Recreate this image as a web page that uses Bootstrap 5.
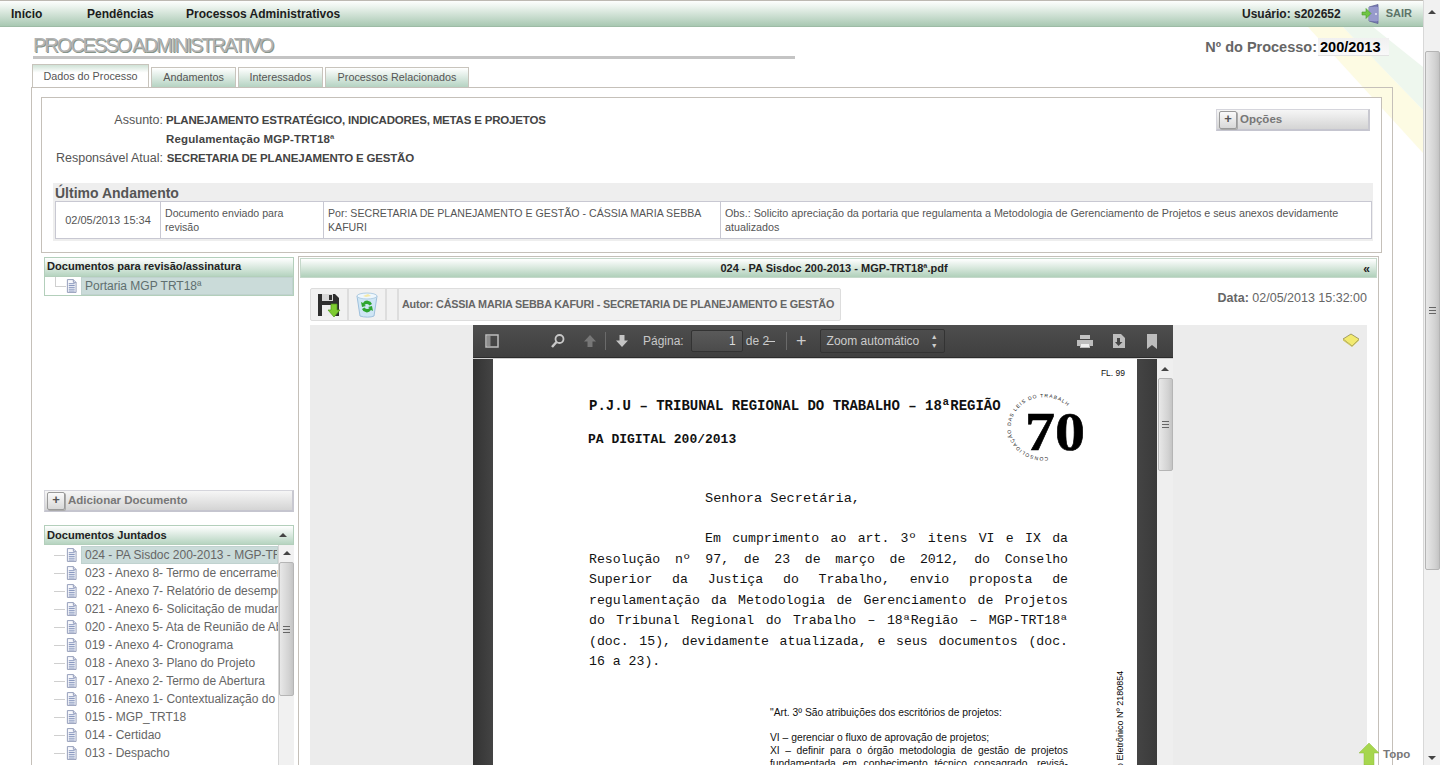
<!DOCTYPE html>
<html lang="pt-BR">
<head>
<meta charset="utf-8">
<title>Processo Administrativo</title>
<link href="https://cdn.jsdelivr.net/npm/bootstrap@5.3.0/dist/css/bootstrap.min.css" rel="stylesheet">
<style>
html,body{height:765px;overflow:hidden;background:#fff}
body{font-family:"Liberation Sans",Arial,sans-serif;font-size:12px;color:#444}
.shell{height:765px;overflow:hidden}
.pagecol{width:1423px;flex:none;position:relative;height:765px;overflow:hidden}
.decor{position:absolute;left:1300px;top:27px;z-index:0}
.pagecol>*:not(.decor){position:relative;z-index:1}
.pgscroll{width:17px;flex:none;background:#f1f1f1;border-left:1px solid #d8d8d8;height:765px;display:flex;flex-direction:column;align-items:center;position:relative}
.thumb{background:linear-gradient(90deg,#e8e8e8,#d2d2d2 70%,#c4c4c4);border:1px solid #b5b5b5;border-radius:2px;display:flex;align-items:center;justify-content:center}
.pgscroll .thumb{width:15px;height:519px;margin-top:37px}
.arrow-up{width:0;height:0;border:4px solid transparent;border-bottom:4px solid #444;border-top:0}
.arrow-dn{width:0;height:0;border:4px solid transparent;border-top:4px solid #444;border-bottom:0}
.pgscroll .arrow-up{margin-top:10px}
.pgscroll .arrow-dn{position:absolute;bottom:5px;left:4px}
.grip{width:7px;height:7px;background:repeating-linear-gradient(#666 0 1px,transparent 1px 3px)}
.topbar{height:27px;border-top:1px solid #bdb9b2;border-bottom:1px solid #9dbba5;background:linear-gradient(#fdfefd,#eef5f0 20%,#a8c8b2);padding-left:11px;padding-right:11px;font-weight:700;font-size:12px;color:#1c1c1c}
.topbar .menu-a{width:76px}
.topbar .menu-b{width:99px}
.user{margin-right:20px;color:#222}
.sair{color:#5c7468;font-size:11px;margin-left:4px}
.headrow{height:38px;padding-left:33px;padding-right:34px}
.bigtitle{width:762px;height:32px;border-bottom:3px solid #c4c4c4;font-size:20px;letter-spacing:-2.05px;line-height:36px;color:#b2b2b2;text-shadow:1px 1px 0 #87958a;font-weight:400}
.procno{font-size:14.5px;font-weight:700;color:#666;margin-top:10px;margin-left:auto}
.procval{display:inline-block;background:linear-gradient(#f0f0f0,#f9f9f9);border-bottom:1px solid #e2e2e2;color:#000;width:71px;padding-left:2px;height:18px;line-height:18px;margin-left:1px}
.tabrow{height:22px;padding-left:32px;gap:2px;position:relative}
.tabx{height:20px;margin-top:2px;border:1px solid #c8c4bc;border-bottom:0;background:linear-gradient(#fff,#b5d3c2);font-size:10.8px;color:#555;text-align:center;line-height:18px}
.tabx.on{height:23px;margin-top:-1px;background:linear-gradient(#cfe2d6,#fff 35%);position:relative;z-index:2;line-height:22px}
.w1{width:117px}.w2{width:85px}.w3{width:85px}.w4{width:144px}
.mainpanel{margin-left:31px;width:1362px;height:700px;border:1px solid #c5c0b9;border-bottom:0;padding:9px 10px 0 9px}
.infobox{height:156px;border:1px solid #c5c0b9;background:#fff;padding:13px 11px 0 11px;position:relative}
.info-l{width:113px;text-align:right;color:#555;padding-right:3px;font-size:12.5px;font-weight:400;letter-spacing:0}
.inforow{height:19px;line-height:19px;font-weight:700;color:#444;font-size:11.5px;letter-spacing:-.18px}
.widerow{letter-spacing:.15px}
.gbtn{background:linear-gradient(#f6f6f6,#d4d4d4);border:1px solid #d5d5dc;border-bottom:2px solid #c5c5cf;border-right:2px solid #c8c8d0;display:flex;align-items:center;height:22px;font-weight:700;color:#777;font-size:11.5px}
.plus{width:18px;height:18px;margin:0 3px 0 2px;border:1px solid #9a9a9a;border-radius:2px;background:linear-gradient(#fafafa,#d8d8d8);box-shadow:1px 1px 0 #aaa;color:#555;line-height:14px;text-align:center;font-weight:700;font-size:13px}
.optbtn{position:absolute;left:1174px;top:11px;width:154px}
.lastbox{margin-top:15px;height:58px;margin-right:-3px;background:#eee;padding:2px 1px 0 2px}
.lastbox h6{margin:0 0 -1px;font-size:14px;font-weight:700;color:#555;line-height:17px}
.evt{height:38px;border:1px solid #c8c8d2;background:#fff;font-size:10.6px;line-height:14px;color:#555}
.evt>div{padding:4px 4px 0;border-right:1px solid #c8c8d2}
.evt>div:last-child{border-right:0}
.c1{width:105px;text-align:center;padding-top:11px!important;font-size:11px}.c2{width:163px}.c3{width:397px}.c4{flex:1;font-size:10.75px}
.lower{margin-top:3px;margin-left:3px;margin-right:2px;gap:4px}
.leftc{width:250px;flex:none;margin-top:1px}
.sechead{height:20px;border:1px solid #b3cfbb;background:linear-gradient(#fff,#b6d4c0);font-weight:700;color:#222;font-size:11.1px;line-height:16px;padding:0 2px}
.chosenbox{border:1px solid #b3cfbb;border-top:0;height:19px}
.noderow{height:18px;position:relative;padding-left:21px}
.treeitems .noderow{padding-left:22px}
.noderow::before{content:"";position:absolute;left:10px;top:9px;width:11px;border-top:1px solid #cfcfcf}
.chosenbox .noderow::after{content:"";position:absolute;left:10px;top:0;height:9px;border-left:1px solid #cfcfcf}
.noderow svg{flex:none;margin-right:4px}
.nodetext{font-size:12px;color:#666;line-height:18px;white-space:nowrap;overflow:hidden;padding-left:4px;flex:1}
.nodetext.sel{background:#cadbd9;border:1px solid #c0d2cf;line-height:16px;padding-left:3px}
.chosen-t{color:#5f6f6f}
.addbtn{margin-top:194px;width:250px}
.listhead{margin-top:13px}
.treewrap{height:225px;overflow:hidden}
.treeitems{width:234px;flex:none;padding-top:1px}
.innerbar{width:16px;flex:none;background:#f1f1f1;border-left:1px solid #d6d6d6;display:flex;flex-direction:column;align-items:center}
.innerbar .arrow-up{margin-top:6px}
.innerbar .thumb{width:15px;height:134px;margin-top:7px}
.rightc{width:1081px;flex:none;height:520px;border:1px solid #c5c0b9;border-bottom:0;padding:1px}
.docbar{height:20px;border:1px solid #c5d8ca;background:linear-gradient(#fff,#b0d0ba);font-weight:700;font-size:11px;color:#222;line-height:19px;text-align:center;position:relative;padding-right:9px}
.collapse-x{position:absolute;right:6px;top:1px;font-size:12px}
.doctools{padding:10px 10px 0 10px;height:47px}
.toolset{height:33px;border:1px solid #ddd;border-radius:2px;background:#f1f1f1;font-weight:700;font-size:10.8px;letter-spacing:-.19px;color:#666}
.tcell{border-right:2px solid #ddd;height:100%;display:flex;align-items:center;justify-content:center}
.t1{width:38px}.t2{width:38px}.t3{width:12px}
.authorname{padding:0 6px 0 3px;white-space:nowrap}
.datet{font-size:12.5px;color:#666;padding-top:1px;margin-left:auto}
.graybg{margin:0 10px;background:#ececec;height:440px;position:relative;display:flex}
.note{position:absolute;right:7px;top:8px}
.viewer{width:700px;flex:none;background:#3c3c3c;height:440px;margin-left:163px}
.vtool{height:33px;background:linear-gradient(#4e4e4e,#3f3f3f);border-bottom:1px solid #2b2b2b;color:#c8c8c8;font-size:12px;box-shadow:0 1px 0 #cfcfcf;position:relative;z-index:2}
.vinput{width:52px;height:22px;background:linear-gradient(#5a5a5a,#4b4b4b);border:1px solid #333;border-radius:2px;text-align:right;padding-right:6px;line-height:20px;margin-left:7px;color:#ddd}
.vselect{width:125px;height:24px;border:1px solid #333;border-radius:2px;background:linear-gradient(#4d4d4d,#414141);line-height:22px;padding:0 6px;color:#ccc;margin-left:13px;justify-content:space-between}
.vsep{width:1px;height:18px;background:#6a6a6a}
.vbody{height:407px;overflow:hidden;background:linear-gradient(90deg,#333,#444 20px,#444 664px,#333)}
.sheet{width:644px;margin:0 20px;background:#fff;height:440px;position:relative;flex:none;padding:38px 69px 0 96px;color:#111;font-family:"Liberation Mono",monospace;font-size:13.6px;overflow:hidden}
.bold1{font-weight:700;font-size:14px;line-height:20px}
.bold2{font-weight:700;font-size:13px;line-height:20px;margin-top:14px;margin-left:-1px}
.salute{margin-top:39px;padding-left:116px;line-height:20px}
.jline{text-align:justify;text-align-last:justify;line-height:20.5px;font-size:13.2px}
.para1{margin-top:20px}
.indent{padding-left:116px}
.lastl{text-align-last:left}
.foot{font-family:"Liberation Sans",sans-serif;font-size:10.3px;margin:33px 0 0 181px;line-height:13px;color:#111}
.foot .just{text-align:justify;text-align-last:justify}
.flno{position:absolute;right:12px;top:10px;font:8.5px "Liberation Sans",sans-serif}
.vtext{position:absolute;left:622px;top:316px;writing-mode:vertical-rl;transform:rotate(180deg);font:9px "Liberation Sans",sans-serif;white-space:nowrap;height:94px;color:#000}
.seal{position:absolute;left:514px;top:36px}
.vbar{width:16px;flex:none;background:#efefef;display:flex;flex-direction:column;align-items:center}
.vbar .arrow-up{margin-top:9px}
.vbar .thumb{width:15px;height:93px;margin-top:7px}
.pagecol>.topo{position:absolute;left:1359px;top:743px;z-index:5;font-size:11.5px;font-weight:700;color:#777;display:flex;gap:4px}
.topo span{margin-top:3px}
</style>
</head>
<body>
<svg width="0" height="0" class="d-block" style="position:absolute">
<defs>
<symbol id="doc" viewBox="0 0 12 15">
<path d="M1.500.5h6.500l3 3v11h-9.500z" fill="#f7f8fc" stroke="#8d97b5"/>
<path d="M8 .5v3h3" fill="#dfe4f2" stroke="#8d97b5"/>
<path d="M3 5h6.500M3 7h6.500M3 9h6.500M3 11h6.500M3 13h6.500" stroke="#7d8db8" stroke-width="1"/>
</symbol>
</defs>
</svg>
<div class="shell d-flex">
<div class="pagecol">
  <svg class="decor" width="123" height="130" viewBox="0 0 123 130"><polygon points="8,0 43,0 123,83 123,126" fill="#fdfbe3"/><polygon points="43,0 73,0 123,40 123,83" fill="#eef7ee"/></svg>
  <div class="topbar d-flex align-items-center">
    <div class="menu-a">Início</div><div class="menu-b">Pendências</div><div>Processos Administrativos</div>
    <div class="user ms-auto">Usuário: s202652</div>
    <svg width="21" height="20" viewBox="0 0 21 20"><path d="M8 3l9-2.500v19L8 17z" fill="#7d7fb8" stroke="#55578c" stroke-width=".7"/><path d="M8 3h10v14H8z" fill="#a3a5d4" opacity=".7"/><path d="M1 8h4V4.500l5 5-5 5V11H1z" fill="#6fc544" stroke="#4a9a2a" stroke-width=".6"/><circle cx="15" cy="10" r="1" fill="#e6e6f5"/></svg>
    <div class="sair">SAIR</div>
  </div>
  <div class="headrow d-flex align-items-start">
    <div class="bigtitle">PROCESSO ADMINISTRATIVO</div>
    <div class="procno">Nº do Processo:<span class="procval">200/2013</span></div>
  </div>
  <div class="tabrow d-flex">
    <div class="tabx on w1">Dados do Processo</div>
    <div class="tabx w2">Andamentos</div>
    <div class="tabx w3">Interessados</div>
    <div class="tabx w4">Processos Relacionados</div>
  </div>
  <div class="mainpanel">
    <div class="infobox">
      <div class="inforow d-flex"><div class="info-l">Assunto:</div><div>PLANEJAMENTO ESTRATÉGICO, INDICADORES, METAS E PROJETOS</div></div>
      <div class="inforow widerow d-flex"><div class="info-l"></div><div>Regulamentação MGP-TRT18ª</div></div>
      <div class="inforow d-flex"><div class="info-l">Responsável Atual:</div><div>&#8202;SECRETARIA DE PLANEJAMENTO E GESTÃO</div></div>
      <div class="gbtn optbtn"><div class="plus">+</div>Opções</div>
      <div class="lastbox">
        <h6>Último Andamento</h6>
        <div class="evt d-flex">
          <div class="c1">02/05/2013 15:34</div>
          <div class="c2">Documento enviado para revisão</div>
          <div class="c3">Por: SECRETARIA DE PLANEJAMENTO E GESTÃO - CÁSSIA MARIA SEBBA KAFURI</div>
          <div class="c4">Obs.: Solicito apreciação da portaria que regulamenta a Metodologia de Gerenciamento de Projetos e seus anexos devidamente atualizados</div>
        </div>
      </div>
    </div>
    <div class="lower d-flex">
      <div class="leftc">
        <div class="sechead">Documentos para revisão/assinatura</div>
        <div class="chosenbox"><div class="noderow d-flex align-items-center"><svg width="11" height="14"><use href="#doc"/></svg><div class="nodetext sel chosen-t">Portaria MGP TRT18ª</div></div></div>
        <div class="gbtn addbtn"><div class="plus">+</div>Adicionar Documento</div>
        <div class="sechead listhead d-flex justify-content-between align-items-center"><span>Documentos Juntados</span><span class="arrow-up me-1"></span></div>
        <div class="treewrap d-flex">
          <div class="treeitems">
            <div class="noderow d-flex align-items-center"><svg width="11" height="14"><use href="#doc"/></svg><div class="nodetext sel">024 - PA Sisdoc 200-2013 - MGP-TRT18ª.pdf</div></div>
            <div class="noderow d-flex align-items-center"><svg width="11" height="14"><use href="#doc"/></svg><div class="nodetext">023 - Anexo 8- Termo de encerramento</div></div>
            <div class="noderow d-flex align-items-center"><svg width="11" height="14"><use href="#doc"/></svg><div class="nodetext">022 - Anexo 7- Relatório de desempenho</div></div>
            <div class="noderow d-flex align-items-center"><svg width="11" height="14"><use href="#doc"/></svg><div class="nodetext">021 - Anexo 6- Solicitação de mudança</div></div>
            <div class="noderow d-flex align-items-center"><svg width="11" height="14"><use href="#doc"/></svg><div class="nodetext">020 - Anexo 5- Ata de Reunião de Abertura</div></div>
            <div class="noderow d-flex align-items-center"><svg width="11" height="14"><use href="#doc"/></svg><div class="nodetext">019 - Anexo 4- Cronograma</div></div>
            <div class="noderow d-flex align-items-center"><svg width="11" height="14"><use href="#doc"/></svg><div class="nodetext">018 - Anexo 3- Plano do Projeto</div></div>
            <div class="noderow d-flex align-items-center"><svg width="11" height="14"><use href="#doc"/></svg><div class="nodetext">017 - Anexo 2- Termo de Abertura</div></div>
            <div class="noderow d-flex align-items-center"><svg width="11" height="14"><use href="#doc"/></svg><div class="nodetext">016 - Anexo 1- Contextualização do Projeto</div></div>
            <div class="noderow d-flex align-items-center"><svg width="11" height="14"><use href="#doc"/></svg><div class="nodetext">015 - MGP_TRT18</div></div>
            <div class="noderow d-flex align-items-center"><svg width="11" height="14"><use href="#doc"/></svg><div class="nodetext">014 - Certidao</div></div>
            <div class="noderow d-flex align-items-center"><svg width="11" height="14"><use href="#doc"/></svg><div class="nodetext">013 - Despacho</div></div>
          </div>
          <div class="innerbar"><span class="arrow-up"></span><div class="thumb"><span class="grip"></span></div></div>
        </div>
      </div>
      <div class="rightc">
        <div class="docbar">024 - PA Sisdoc 200-2013 - MGP-TRT18ª.pdf<span class="collapse-x">«</span></div>
        <div class="doctools d-flex align-items-start">
          <div class="toolset d-flex align-items-center">
            <div class="tcell t1"><svg width="24" height="26" viewBox="0 0 24 26"><path d="M1 2h17l4 4v18H1z" fill="#2e2e2e"/><path d="M5 2h11v7H5z" fill="#d8d8d8"/><path d="M12 3h3v5h-3z" fill="#333"/><path d="M5 13h13v11H5z" fill="#eee"/><path d="M14 12h6v6h3l-6 7-6-7h3z" fill="#7ecb30" stroke="#4f9a18" stroke-width=".7"/></svg></div>
            <div class="tcell t2"><svg width="26" height="27" viewBox="0 0 26 27"><path d="M3 5c5-3 15-3 20 0l-3 20c-3 1.500-10 1.500-14 0z" fill="#cfe6f5" stroke="#9fc0dc"/><ellipse cx="13" cy="5" rx="10" ry="3" fill="#eef7fd" stroke="#b4cfe4"/><path d="M9 5l5-2 3 2-5 1z" fill="#f4e9a8"/><path d="M18 13a5 5 0 0 0-9-1l-2-1 1 5 4-1-1.500-1a3 3 0 0 1 5 .5zM8 18a5 5 0 0 0 9 1l2 1-1-5-4 1 1.500 1a3 3 0 0 1-5-.5z" fill="#2fa52f"/></svg></div>
            <div class="tcell t3"></div>
            <div class="authorname">Autor: CÁSSIA MARIA SEBBA KAFURI - SECRETARIA DE PLANEJAMENTO E GESTÃO</div>
          </div>
          <div class="datet"><b>Data:</b> 02/05/2013 15:32:00</div>
        </div>
        <div class="graybg">
          <svg class="note" width="18" height="14" viewBox="0 0 18 14"><path d="M1 6l8-5 8 5-7 7z" fill="#f2ea70" stroke="#8f8a50" stroke-width=".8"/><path d="M1 6v1.500l9 6.500 7-6.500V6l-7 7z" fill="#cfc65a"/></svg>
          <div class="viewer">
            <div class="vtool d-flex align-items-center">
              <svg style="margin-left:12px" width="14" height="14" viewBox="0 0 14 14"><rect x="1" y="1" width="12" height="12" fill="none" stroke="#bdbdbd" stroke-width="1.500"/><rect x="2" y="2" width="3.500" height="10" fill="#8c8c8c"/></svg>
              <svg style="margin-left:51px" width="16" height="16" viewBox="0 0 16 16"><circle cx="9.500" cy="6" r="4" fill="none" stroke="#c8c8c8" stroke-width="1.800"/><path d="M6.500 9L2 14" stroke="#c8c8c8" stroke-width="2.500"/></svg>
              <svg style="margin-left:17px" width="14" height="14" viewBox="0 0 14 14"><path d="M7 1l6 6.500H9.500V13h-5V7.500H1z" fill="#777"/></svg>
              <span class="vsep" style="margin:0 9px 0 8px"></span>
              <svg width="14" height="14" viewBox="0 0 14 14"><path d="M7 13l6-6.500H9.500V1h-5v5.500H1z" fill="#c4c4c4"/></svg>
              <span style="margin-left:14px">Página:</span>
              <div class="vinput">1</div>
              <span style="margin-left:3px">de 2</span><span style="width:9px;border-top:1.500px solid #ccc;margin-left:-3px"></span>
              <span class="vsep" style="margin:0 9px 0 11px"></span>
              <span style="font-size:18px;line-height:18px;color:#ccc">+</span>
              <div class="vselect d-flex"><span>Zoom automático</span><span style="font-size:7px;line-height:9px;padding-top:2px;text-align:center">▲<br>▼</span></div>
              <svg class="ms-auto" width="18" height="15" viewBox="0 0 18 15"><path d="M4 1h10v4H4z" fill="#c4c4c4"/><path d="M1 6h16v6h-3v2H4v-2H1z" fill="#bdbdbd"/><path d="M5 10h8v3H5z" fill="#eee"/></svg>
              <svg style="margin-left:18px" width="14" height="16" viewBox="0 0 14 16"><path d="M1 1h8l4 4v10H1z" fill="#bdbdbd"/><path d="M5 5h3v4h2.500L6.500 13 3 9h2z" fill="#444"/></svg>
              <svg style="margin-left:21px;margin-right:16px" width="10" height="15" viewBox="0 0 10 15"><path d="M0 0h10v15L5 11 0 15z" fill="#bdbdbd"/></svg>
            </div>
            <div class="vbody d-flex">
              <div class="sheet">
                <div class="flno">FL. 99</div>
                <div class="bold1">P.J.U – TRIBUNAL REGIONAL DO TRABALHO – 18ªREGIÃO</div>
                <div class="bold2">PA DIGITAL 200/2013</div>
                <div class="salute">Senhora Secretária,</div>
                <div class="jline para1 indent">Em cumprimento ao art. 3º itens VI e IX da</div>
                <div class="jline">Resolução nº 97, de 23 de março de 2012, do Conselho</div>
                <div class="jline">Superior da Justiça do Trabalho, envio proposta de</div>
                <div class="jline">regulamentação da Metodologia de Gerenciamento de Projetos</div>
                <div class="jline">do Tribunal Regional do Trabalho – 18ªRegião – MGP-TRT18ª</div>
                <div class="jline">(doc. 15), devidamente atualizada, e seus documentos (doc.</div>
                <div class="jline lastl">16 a 23).</div>
                <div class="foot">
                  <div>"Art. 3º São atribuições dos escritórios de projetos:</div>
                  <div style="margin-top:12px">VI – gerenciar o fluxo de aprovação de projetos;</div>
                  <div class="just">XI – definir para o órgão metodologia de gestão de projetos</div>
                  <div class="just">fundamentada em conhecimento técnico consagrado, revisá-</div>
                </div>
                <svg class="seal" width="82" height="72" viewBox="0 0 82 72">
                  <defs><path id="arc" d="M41 63A33 30 0 1 1 60 12"/></defs>
                  <text font-family="Liberation Sans" font-size="5" letter-spacing="1" fill="#222"><textPath href="#arc">CONSOLIDAÇÃO DAS LEIS DO TRABALHO</textPath></text>
                  <text x="18" y="56" font-family="Liberation Serif" font-weight="700" font-size="54" textLength="60" lengthAdjust="spacingAndGlyphs" stroke="#000" stroke-width=".6" fill="#000">70</text>
                </svg>
                <div class="vtext">o Eletrônico Nº 2180854</div>
              </div>
              <div class="vbar"><span class="arrow-up"></span><div class="thumb"><span class="grip"></span></div></div>
            </div>
          </div>
        </div>
      </div>
    </div>
  </div>
  <div class="topo">
    <svg width="20" height="22" viewBox="0 0 20 22"><path d="M10 0l10 10h-5v12H5V10H0z" fill="#a6d64e" stroke="#8fbf3c" stroke-width=".5"/></svg>
    <span>Topo</span>
  </div>
</div>
<div class="pgscroll"><span class="arrow-up"></span><div class="thumb"><span class="grip"></span></div><span class="arrow-dn"></span></div>
</div>
</body>
</html>
